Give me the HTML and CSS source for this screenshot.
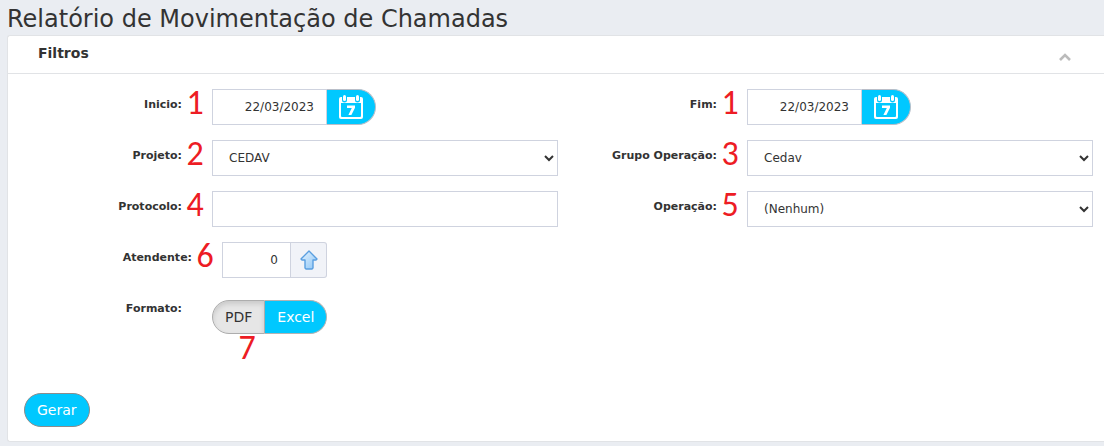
FILE: index.html
```html
<!DOCTYPE html>
<html lang="pt-BR">
<head>
    <meta charset="UTF-8">
    <title>Relatório de Movimentação de Chamadas</title>
    <link rel="stylesheet" href="styles.css">
</head>
<body>
    <h1>Relatório de Movimentação de Chamadas</h1>

    <form class="panel">
        <div class="panel-header">
            <h2>Filtros</h2>
            <button type="button" class="collapse" aria-label="Recolher">
                <svg width="12" height="8" viewBox="0 0 12 8"><path d="M1 7 L6 2 L11 7" fill="none" stroke="#bbbbbb" stroke-width="2.6"/></svg>
            </button>
        </div>

        <div class="filters">
            <div class="row">
                <label for="inicio">Inicio:</label>
                <span class="step">1</span>
                <div class="date-group">
                    <input type="text" id="inicio" value="22/03/2023">
                    <button type="button" aria-label="Abrir calendário">
                        <svg width="26" height="26" viewBox="0 0 26 26">
                            <rect x="1" y="3" width="24" height="22" rx="2" fill="#fff"/>
                            <path d="M3 9h20v13a1 1 0 0 1-1 1H4a1 1 0 0 1-1-1z" fill="#00c8ff"/>
                            <path d="M4 2h5v4a2 2 0 0 1-5 0zM17 2h5v4a2 2 0 0 1-5 0z" fill="#00c8ff"/>
                            <rect x="5" y="1" width="3" height="6" rx="1.5" fill="#fff"/>
                            <rect x="18" y="1" width="3" height="6" rx="1.5" fill="#fff"/>
                            <path d="M9 11.5h8v2.2L13.4 21H10.4l3.4-7H9z" fill="#fff"/>
                        </svg>
                    </button>
                </div>
            </div>
            <div class="row">
                <label for="fim">Fim:</label>
                <span class="step">1</span>
                <div class="date-group">
                    <input type="text" id="fim" value="22/03/2023">
                    <button type="button" aria-label="Abrir calendário">
                        <svg width="26" height="26" viewBox="0 0 26 26">
                            <rect x="1" y="3" width="24" height="22" rx="2" fill="#fff"/>
                            <path d="M3 9h20v13a1 1 0 0 1-1 1H4a1 1 0 0 1-1-1z" fill="#00c8ff"/>
                            <path d="M4 2h5v4a2 2 0 0 1-5 0zM17 2h5v4a2 2 0 0 1-5 0z" fill="#00c8ff"/>
                            <rect x="5" y="1" width="3" height="6" rx="1.5" fill="#fff"/>
                            <rect x="18" y="1" width="3" height="6" rx="1.5" fill="#fff"/>
                            <path d="M9 11.5h8v2.2L13.4 21H10.4l3.4-7H9z" fill="#fff"/>
                        </svg>
                    </button>
                </div>
            </div>

            <div class="row">
                <label for="projeto">Projeto:</label>
                <span class="step">2</span>
                <select id="projeto">
                    <option>CEDAV</option>
                </select>
            </div>
            <div class="row">
                <label for="grupo">Grupo Operação:</label>
                <span class="step">3</span>
                <select id="grupo">
                    <option>Cedav</option>
                </select>
            </div>

            <div class="row">
                <label for="protocolo">Protocolo:</label>
                <span class="step">4</span>
                <input type="text" id="protocolo">
            </div>
            <div class="row">
                <label for="operacao">Operação:</label>
                <span class="step">5</span>
                <select id="operacao">
                    <option>(Nenhum)</option>
                </select>
            </div>

            <div class="row row-indent">
                <label for="atendente">Atendente:</label>
                <span class="step">6</span>
                <div class="lookup-group">
                    <input type="text" id="atendente" value="0">
                    <button type="button" aria-label="Buscar atendente">
                        <svg width="18" height="20" viewBox="0 0 18 20">
                            <defs>
                                <linearGradient id="arrow" x1="0" y1="0" x2="1" y2="1">
                                    <stop offset="0" stop-color="#e6f4ff"/>
                                    <stop offset="1" stop-color="#8cc4f5"/>
                                </linearGradient>
                            </defs>
                            <path d="M9 1 L17 9 L16 10 H13 V18 L12 19 H6 L5 18 V10 H2 L1 9 Z" fill="url(#arrow)" stroke="#5a9fe0" stroke-width="1.4" stroke-linejoin="round"/>
                        </svg>
                    </button>
                </div>
            </div>

            <div class="row row-format">
                <span class="label" id="formato">Formato:</span>
                <div class="format">
                    <div class="toggle" role="group" aria-labelledby="formato">
                        <button type="button" class="active" aria-pressed="true">PDF</button>
                        <button type="button" aria-pressed="false">Excel</button>
                    </div>
                    <span class="step">7</span>
                </div>
            </div>
        </div>

        <div class="actions">
            <button type="submit" class="submit">Gerar</button>
        </div>
    </form>
</body>
</html>
```
FILE: styles.css
```css
* {
    box-sizing: border-box;
}
body {
    margin: 0;
    padding: 3px 0 4px 7px;
    background-color: #eaedf2;
    color: #333;
    font-family: Verdana, "DejaVu Sans", sans-serif;
    font-size: 12px;
    overflow-x: hidden;
}
h1 {
    margin: 0;
    font-size: 24px;
    font-weight: normal;
    line-height: 32px;
}
button, input, select {
    font-family: inherit;
    font-size: 12px;
    color: #333;
    margin: 0;
}
button {
    cursor: pointer;
    padding: 0;
}
.panel {
    background: white;
    border: 1px solid #e1e3e6;
    border-right: none;
    border-radius: 3px 0 0 3px;
}
.panel-header {
    display: flex;
    align-items: center;
    justify-content: space-between;
    height: 38px;
    padding: 0 33px 0 30px;
    border-bottom: 1px solid #e1e3e6;
}
.panel-header h2 {
    margin: 0;
    padding-bottom: 3px;
    font-size: 14px;
}
.collapse {
    display: flex;
    background: none;
    border: none;
    padding-top: 4px;
}
.filters {
    display: grid;
    grid-template-columns: 1fr 1fr;
    row-gap: 15px;
    padding: 15px 11px 0 15px;
}
.row {
    display: flex;
    align-items: flex-start;
}
.row label, .row .label {
    flex: 0 0 159px;
    padding-top: 9px;
    font-size: 11px;
    font-weight: bold;
    line-height: 14px;
    text-align: right;
}
.row > input, .row > select {
    flex: 1;
    min-width: 0;
}
.row-indent {
    padding-left: 10px;
}
.row-format {
    grid-column: 1;
}
.step {
    flex: 0 0 30px;
    padding-right: 4px;
    color: #ed1c24;
    font-family: Calibri, Carlito, Lato, sans-serif;
    font-size: 34px;
    line-height: 28px;
    text-align: center;
}
.row input, .row select {
    height: 36px;
    padding: 0 12px;
    border: 1px solid #cfd3df;
    border-radius: 0;
    background-color: white;
}
.row select {
    padding: 0 0 0 12px;
}
.date-group, .lookup-group {
    display: flex;
}
.date-group input {
    width: 115px;
    text-align: right;
}
.date-group button {
    display: flex;
    align-items: center;
    justify-content: center;
    width: 49px;
    border: 1px solid #b9bec8;
    border-left: none;
    border-radius: 0 18px 18px 0;
    background-color: #00c8ff;
}
.lookup-group input {
    width: 69px;
    text-align: right;
}
.lookup-group button {
    display: flex;
    align-items: center;
    justify-content: center;
    width: 36px;
    border: 1px solid #cfd3df;
    border-left: none;
    border-radius: 0 3px 3px 0;
    background-color: #f1f3f8;
}
.format {
    display: flex;
    flex-direction: column;
    margin-left: 30px;
    padding-top: 7px;
}
.toggle {
    display: flex;
}
.toggle button, .submit {
    height: 34px;
    padding: 0 12px;
    border: 1px solid #b3b3b3;
    background-color: #00c8ff;
    color: white;
    font-size: 14px;
}
.toggle button {
    border-left: none;
    border-radius: 0 17px 17px 0;
}
.toggle .active {
    border: 1px solid #adadad;
    border-radius: 17px 0 0 17px;
    background-color: #e6e6e6;
    box-shadow: inset 0 3px 5px rgba(0, 0, 0, 0.125);
    color: #333;
}
.format .step {
    flex: none;
    width: 74px;
}
.actions {
    padding: 31px 16px 14px;
}
.submit {
    border-color: #8c8c8c;
    border-radius: 17px;
}
```
